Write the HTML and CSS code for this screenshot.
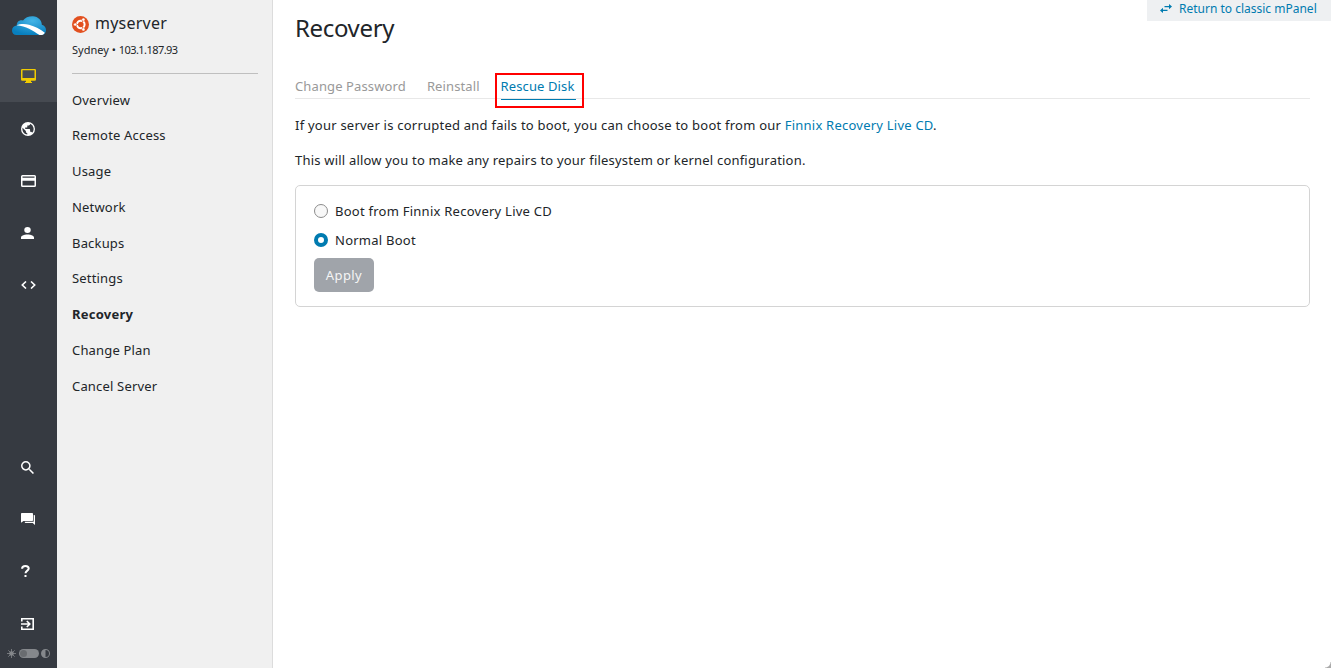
FILE: index.html
```html
<!DOCTYPE html>
<html lang="en">
<head>
    <meta charset="utf-8">
    <title>Recovery - mPanel</title>
    <link rel="stylesheet" href="styles.css">
</head>
<body>
    <!-- Icon rail -->
    <nav class="rail">
        <a class="logo">
            <svg width="34" height="20" viewBox="0 0 34 20">
                <defs>
                    <radialGradient id="cloud" cx="0.6" cy="0.25" r="0.75">
                        <stop offset="0" stop-color="#43b4e6"/>
                        <stop offset="1" stop-color="#087fbe"/>
                    </radialGradient>
                </defs>
                <path fill="url(#cloud)" d="M4.500 19C1.800 19 0 17 0 14.500C0 11.800 2 10 4.800 9.600C4.500 6 7.500 3.600 11 4.600C13 1.500 17 0 21 0.200C26 0.500 30 4.500 29.800 8.800C32.500 9.500 34 11.500 34 14C34 17 32 19 29 19Z"/>
                <path fill="#fff" d="M4.500 9.200C8 7.900 13 7.700 17 8.700C23 10.200 28.500 13.200 32.800 16.700C32 18.400 30.500 19 29 19H27.500C21 14.800 14 9.800 4.500 9.200Z"/>
            </svg>
        </a>
        <a class="rail-item active">
            <svg width="15" height="14" viewBox="0 0 15 14"><path fill-rule="evenodd" d="M1.200 0h12.600Q15 0 15 1.200v9.300q0 1.200-1.200 1.200H10V13h1v1H4v-1h1v-1.300H1.200Q0 11.700 0 10.500V1.200Q0 0 1.200 0zM1.500 1.200V9h12V1.200z"/></svg>
        </a>
        <a class="rail-item">
            <svg width="14" height="14" viewBox="2 2 20 20"><path d="M17.900 17.390c-.26-.8-1.010-1.390-1.900-1.390h-1v-3a1 1 0 0 0-1-1H8v-2h2a1 1 0 0 0 1-1V7h2a2 2 0 0 0 2-2v-.41a7.984 7.984 0 0 1 2.900 12.800M11 19.930c-3.950-.49-7-3.850-7-7.930 0-.62.08-1.220.21-1.790L9 15v1a2 2 0 0 0 2 2m1-16A10 10 0 0 0 2 12a10 10 0 0 0 10 10 10 10 0 0 0 10-10A10 10 0 0 0 12 2z"/></svg>
        </a>
        <a class="rail-item">
            <svg width="15" height="12" viewBox="0 0 15 12"><path fill-rule="evenodd" d="M1.500 0h12Q15 0 15 1.500v9q0 1.500-1.500 1.500h-12Q0 12 0 10.500v-9Q0 0 1.500 0zM1.500 1.500v1.300h12V1.500zM1.500 5.700v4.800h12V5.700z"/></svg>
        </a>
        <a class="rail-item">
            <svg width="13" height="12" viewBox="4 4 16 16" preserveAspectRatio="none"><path d="M12 4a4 4 0 0 1 4 4 4 4 0 0 1-4 4 4 4 0 0 1-4-4 4 4 0 0 1 4-4m0 10c4.420 0 8 1.790 8 4v2H4v-2c0-2.210 3.580-4 8-4z"/></svg>
        </a>
        <a class="rail-item">
            <svg width="15" height="8" viewBox="0 0 15 8"><path class="line" d="M5 .5L1.300 4L5 7.500M10 .5L13.700 4L10 7.500"/></svg>
        </a>
        <div class="rail-bottom">
            <a class="rail-item">
                <svg width="13" height="13" viewBox="3 3 17.500 17.500"><path d="M9.500 3A6.500 6.500 0 0 1 16 9.500c0 1.610-.59 3.090-1.560 4.230l.27.27h.79l5 5-1.500 1.500-5-5v-.79l-.27-.27A6.516 6.516 0 0 1 9.500 16 6.500 6.500 0 0 1 3 9.500 6.500 6.500 0 0 1 9.500 3m0 2C7 5 5 7 5 9.500S7 14 9.500 14 14 12 14 9.500 12 5 9.500 5z"/></svg>
            </a>
            <a class="rail-item">
                <svg width="14" height="12" viewBox="0 0 14 12"><path d="M.8 0h10.400q.8 0 .8.800v6.400q0 .8-.8.800H2.500L0 9.800V.8Q0 0 .8 0zM12.700 2h.5q.8 0 .8.700V12L11.700 10H4.500q-.8 0-.8-1.200h9z"/></svg>
            </a>
            <a class="rail-item">
                <svg width="9" height="12" viewBox="0 0 9 12"><path class="line help" d="M1.100 3.700C1.100 2 2.500 1.100 4.400 1.100C6.400 1.100 7.700 2 7.700 3.600C7.700 5.600 4.600 5.700 4.500 8.300"/><path d="M3.500 10h2v2h-2z"/></svg>
            </a>
            <a class="rail-item last">
                <svg width="13" height="12" viewBox="0 0 13 12"><path class="line" d="M.8 3.500V.8H12.200V11.200H.8V8.500M0 6H8.500M5.800 3L8.800 6L5.800 9"/></svg>
            </a>
        </div>
        <!-- Light / dark switch -->
        <div class="theme">
            <svg width="9" height="9" viewBox="0 0 9 9"><circle cx="4.500" cy="4.500" r="2.300"/><path class="rays" d="M4.500 0V9M0 4.500H9M1.300 1.300L7.700 7.700M7.700 1.300L1.300 7.700"/></svg>
            <span class="switch"></span>
            <svg width="9" height="9" viewBox="0 0 9 9"><path fill-rule="evenodd" d="M4.500 0a4.500 4.500 0 0 1 0 9a4.500 4.500 0 0 1 0-9zM4.500 1v7a3.500 3.500 0 0 0 0-7z"/></svg>
        </div>
    </nav>

    <!-- Server menu -->
    <aside class="sidebar">
        <div class="server">
            <svg width="17" height="17" viewBox="0 0 17 17">
                <circle cx="8.500" cy="8.500" r="8.500" fill="#e2501f"/>
                <circle cx="8.800" cy="8.500" r="3.800" fill="none" stroke="#fff" stroke-width="2"/>
                <path stroke="#e2501f" stroke-width=".7" d="M8.800 8.500L1 8.500M8.800 8.500L12.500 2M8.800 8.500L12.500 15"/>
                <g fill="#fff" stroke="#e2501f" stroke-width=".5"><circle cx="3.200" cy="8.500" r="1.600"/><circle cx="11.400" cy="3.600" r="1.600"/><circle cx="11.400" cy="13.400" r="1.600"/></g>
            </svg>
            <span class="server-name">myserver</span>
        </div>
        <div class="server-info">Sydney • <span class="ip">103.1.187.93</span></div>
        <ul class="menu">
            <li>Overview</li>
            <li>Remote Access</li>
            <li>Usage</li>
            <li>Network</li>
            <li>Backups</li>
            <li>Settings</li>
            <li class="current">Recovery</li>
            <li>Change Plan</li>
            <li>Cancel Server</li>
        </ul>
    </aside>

    <main class="content">
        <header class="top">
            <h1>Recovery</h1>
            <a class="classic">
                <svg width="12" height="9" viewBox="0 0 12 9"><path d="M4.500 2H9V0l3 2.600L9 5.200V3.300H4.500zM7.500 5.700H3V3.800L0 6.400L3 9V7H7.500z"/></svg>
                <span>Return to classic mPanel</span>
            </a>
        </header>
        <div class="tabs">
            <a class="tab">Change Password</a>
            <a class="tab">Reinstall</a>
            <a class="tab selected"><span>Rescue Disk</span></a>
        </div>
        <p>If your server is corrupted and fails to boot, you can choose to boot from our <a class="link">Finnix Recovery Live CD</a>.</p>
        <p class="note">This will allow you to make any repairs to your filesystem or kernel configuration.</p>
        <form class="panel">
            <label class="option"><input type="radio" name="boot"><span>Boot from Finnix Recovery Live CD</span></label>
            <label class="option"><input type="radio" name="boot" checked><span>Normal Boot</span></label>
            <button type="button" disabled>Apply</button>
        </form>
    </main>
    <div class="corner"></div>
</body>
</html>
```
FILE: styles.css
```css
* {
    box-sizing: border-box;
}
body {
    margin: 0;
    height: 100vh;
    display: flex;
    overflow: hidden;
    background: #fff;
    color: #212529;
    font: 13px/20px "Noto Sans", "Open Sans", sans-serif;
    letter-spacing: 0.23px;
}
/* Icon rail */
.rail {
    width: 57px;
    display: flex;
    flex-direction: column;
    background: #363a41;
}
.logo {
    height: 50px;
    padding: 16px 0 0 12px;
}
.rail-item {
    height: 52px;
    display: flex;
    align-items: center;
    padding: 2px 0 0 21px;
}
.rail-item.active {
    padding-top: 0;
    background: #464a51;
}
.rail svg {
    display: block;
    fill: #fff;
}
.rail .active svg {
    fill: #f0cb00;
}
.rail .line {
    fill: none;
    stroke: #fff;
    stroke-width: 1.6;
}
.rail .help {
    stroke-width: 2;
}
.rail-bottom {
    margin-top: auto;
}
.rail-bottom .rail-item {
    padding-top: 0;
}
.rail-bottom .last {
    padding-top: 2px;
}
.theme {
    height: 19px;
    display: flex;
    align-items: flex-start;
    gap: 3px;
    padding-left: 7px;
}
.theme svg {
    fill: #85888c;
}
.theme svg:last-child {
    margin-left: -1px;
}
.theme .rays {
    stroke: #85888c;
    stroke-width: .8;
}
.switch {
    width: 20px;
    height: 9px;
    padding: 1px;
    border-radius: 5px;
    background: #85888c;
}
.switch::before {
    content: "";
    display: block;
    width: 7px;
    height: 7px;
    border-radius: 50%;
    background: #696c70;
}
/* Server menu */
.sidebar {
    width: 216px;
    padding: 12px 14px 0 15px;
    background: #f0f0f0;
    border-right: 1px solid #dcdcdc;
}
.server {
    display: flex;
    align-items: center;
    gap: 6px;
    height: 23px;
}
.server svg {
    margin-top: 2px;
}
.server-name {
    margin-top: -1px;
    font-size: 16px;
}
.server-info {
    height: 39px;
    padding-top: 5px;
    border-bottom: 1px solid #bfbfbf;
    font-size: 11px;
    letter-spacing: 0;
}
.ip {
    letter-spacing: -0.55px;
}
.menu {
    list-style: none;
    margin: 7.7px 0 0;
    padding: 0;
}
.menu li {
    height: 35.75px;
    line-height: 36px;
    letter-spacing: 0.18px;
}
.menu .current {
    font-weight: bold;
    letter-spacing: 0.25px;
}
/* Content */
.content {
    flex: 1;
    padding: 0 21px 0 22px;
}
.top {
    display: flex;
    justify-content: space-between;
    height: 75px;
}
h1 {
    margin: 11px 0 0;
    font-size: 24px;
    line-height: 34px;
    font-weight: normal;
    letter-spacing: -0.35px;
}
.classic {
    display: flex;
    align-items: center;
    gap: 7px;
    width: 184px;
    height: 21px;
    margin-right: -21px;
    padding: 0 0 4px 13px;
    background: #eef0f2;
    color: #007bb0;
    font-size: 12px;
    letter-spacing: 0;
    white-space: nowrap;
}
.classic svg {
    fill: #007bb0;
}
.tabs {
    display: flex;
    height: 24px;
    border-bottom: 1px solid #e8e8e8;
    color: #999;
    letter-spacing: 0.12px;
}
.tab {
    height: 20px;
    line-height: 23px;
    margin-right: 21px;
}
.tab.selected {
    width: 89px;
    height: 35px;
    margin: -2px 0 0 -6.2px;
    padding: 0 6px 0 4px;
    border: 2px solid #f00;
    color: #007bb0;
}
.tab.selected span {
    display: block;
    height: 25px;
    border-bottom: 1px solid #007bb0;
}
p {
    margin: 16px 0 0;
    line-height: 19px;
}
.tabs + p {
    margin-top: 17px;
}
.note {
    letter-spacing: 0.2px;
}
.link {
    color: #007bb0;
}
.panel {
    height: 122px;
    margin-top: 15px;
    padding: 14px 18px;
    border: 1px solid #d4d4d4;
    border-radius: 5px;
}
.option {
    display: flex;
    align-items: center;
    gap: 7px;
    height: 22px;
    margin-bottom: 7px;
    letter-spacing: 0.25px;
}
.option input {
    appearance: none;
    width: 14px;
    height: 14px;
    margin: 0;
    border: 1px solid #8c8c8c;
    border-radius: 50%;
    background: #f8f8f8;
}
.option input:checked {
    border: 4px solid #007bb0;
    background: #fff;
}
button {
    display: block;
    width: 60px;
    height: 34px;
    padding: 0;
    border: none;
    border-radius: 5px;
    background: #a0a4aa;
    color: #f5f5f5;
    font: inherit;
    letter-spacing: 0.4px;
}
/* Chat bubble edge in the bottom right corner */
.corner {
    position: absolute;
    right: 0;
    bottom: 0;
    width: 6px;
    height: 6px;
    background: radial-gradient(circle at 0 0, transparent 5px, #aaa 6px);
}
```
